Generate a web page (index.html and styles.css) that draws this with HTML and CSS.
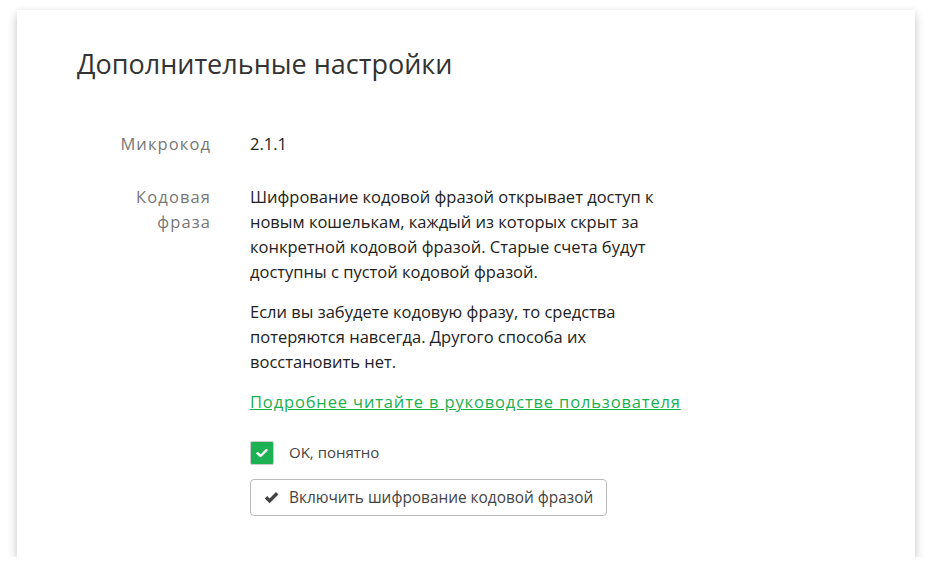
FILE: index.html
```html
<!DOCTYPE html>
<html lang="ru">
<head>
  <meta charset="UTF-8" />
  <meta name="viewport" content="width=device-width, initial-scale=1" />
  <title>Дополнительные настройки</title>
  <link rel="stylesheet" href="styles.css">
</head>
<body>

<section class="card">
  <h2 class="card-title">Дополнительные настройки</h2>

  <div class="settings">
    <div class="label">Микрокод</div>
    <div class="value">2.1.1</div>

    <div class="label">Кодовая<br>фраза</div>
    <div class="value">
      <p>Шифрование кодовой фразой открывает доступ к новым кошелькам, каждый из которых скрыт за конкретной кодовой фразой. Старые счета будут доступны с пустой кодовой фразой.</p>
      <p>Если вы забудете кодовую фразу, то средства потеряются навсегда. Другого способа их восстановить нет.</p>
      <p><a class="guide-link" href="#guide">Подробнее читайте в руководстве пользователя</a></p>

      <label class="check">
        <span class="check-box">
          <svg width="12" height="10" viewBox="0 0 12 10"><path d="M1.5 5.2 L4.6 8 L10.5 2" fill="none" stroke="#fff" stroke-width="2.4" stroke-linecap="round" stroke-linejoin="round"/></svg>
        </span>
        OK, понятно
      </label>

      <button class="btn">
        <svg width="15" height="12" viewBox="0 0 15 12"><path d="M0.8 6.4 L3.2 4 L5.6 6.4 L12 0 L14.4 2.4 L5.6 11.2 Z" fill="#444"/></svg>
        Включить шифрование кодовой фразой
      </button>
    </div>
  </div>
</section>

</body>
</html>
```
FILE: styles.css
```css
body {
  margin: 0;
  background: #fff;
  font-family: "Open Sans", "Liberation Sans", sans-serif;
  color: #222;
}
.card {
  margin: 10px 18px 0 17px;
  height: 547px;
  box-sizing: border-box;
  padding: 38px 60px 0 60px;
  background: #fff;
  box-shadow: 0 5px 10px rgba(0, 0, 0, 0.2), 0 0 6px rgba(0, 0, 0, 0.06);
}
.card-title {
  margin: 0 0 51px;
  font-size: 27px;
  font-weight: normal;
  color: #333;
  line-height: 32px;
}
.settings {
  display: grid;
  grid-template-columns: 134px 440px;
  column-gap: 39px;
  row-gap: 28px;
  font-size: 16.5px;
  line-height: 25px;
}
.label {
  text-align: right;
  color: #777;
  letter-spacing: 1.1px;
}
.value p {
  margin: 0 0 15px;
}
.guide-link {
  color: #1aaf4f;
  letter-spacing: 0.85px;
}
.check {
  display: flex;
  align-items: center;
  gap: 15px;
  margin-top: 26px;
  font-size: 15px;
  color: #444;
}
.check-box {
  width: 24px;
  height: 24px;
  box-sizing: border-box;
  border: 1px solid #ccc;
  border-radius: 2px;
  background: #1cb253;
  display: flex;
  align-items: center;
  justify-content: center;
}
.btn {
  margin-top: 14px;
  display: flex;
  align-items: center;
  gap: 10px;
  height: 37px;
  padding: 0 13px;
  border: 1px solid #bbb;
  border-radius: 4px;
  background: #fff;
  font-family: inherit;
  font-size: 15.4px;
  color: #444;
}
```
